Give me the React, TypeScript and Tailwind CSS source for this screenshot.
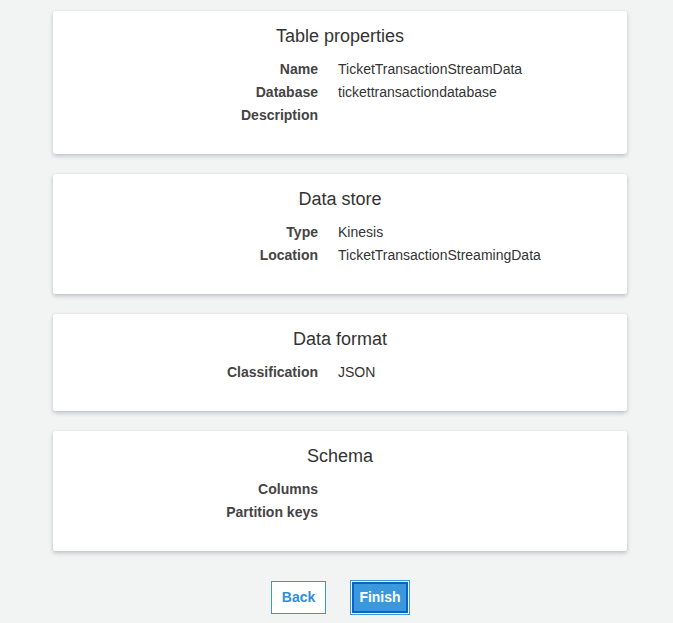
import React from "react";

type Row = { label: string; value?: string };

const sections: { title: string; rows: Row[] }[] = [
  {
    title: "Table properties",
    rows: [
      { label: "Name", value: "TicketTransactionStreamData" },
      { label: "Database", value: "tickettransactiondatabase" },
      { label: "Description" },
    ],
  },
  {
    title: "Data store",
    rows: [
      { label: "Type", value: "Kinesis" },
      { label: "Location", value: "TicketTransactionStreamingData" },
    ],
  },
  {
    title: "Data format",
    rows: [{ label: "Classification", value: "JSON" }],
  },
  {
    title: "Schema",
    rows: [{ label: "Columns" }, { label: "Partition keys" }],
  },
];

function Section({ title, rows }: { title: string; rows: Row[] }) {
  return (
    <div className="bg-white rounded-[2px] shadow-[0_2px_4px_rgba(0,28,36,0.22),0_0_1px_rgba(0,28,36,0.12)] pt-[13px] pb-[27px]">
      <h3 className="text-center text-[18px] leading-6 text-[#333]">{title}</h3>
      <div className="mt-[10px]">
        {rows.map((r) => (
          <div key={r.label} className="flex text-[14px] leading-[23px]">
            <div className="w-[265px] shrink-0 text-right font-bold text-[#444]">
              {r.label}
            </div>
            <div className="pl-5 text-[#333]">{r.value}</div>
          </div>
        ))}
      </div>
    </div>
  );
}

export default function App() {
  return (
    <div
      className="min-h-[623px] bg-[#f2f3f3] pt-[11px]"
      style={{ fontFamily: '"Liberation Sans", Arial, sans-serif' }}
    >
      <div className="ml-[53px] w-[574px] flex flex-col gap-5">
        {sections.map((s) => (
          <Section key={s.title} title={s.title} rows={s.rows} />
        ))}
      </div>

      <div className="flex justify-center items-center gap-[26px] mt-[30px] pl-[6px]">
        <button className="h-[33px] w-[55px] bg-white border border-[#3d97d5] text-[#2e8fd4] text-[14px] font-bold">
          Back
        </button>
        <button className="h-[31px] w-[56px] bg-[#3a98dc] border-2 border-[#0b62c6] text-white text-[14px] font-bold outline outline-1 outline-offset-1 outline-[#3a98dc]">
          Finish
        </button>
      </div>
    </div>
  );
}
